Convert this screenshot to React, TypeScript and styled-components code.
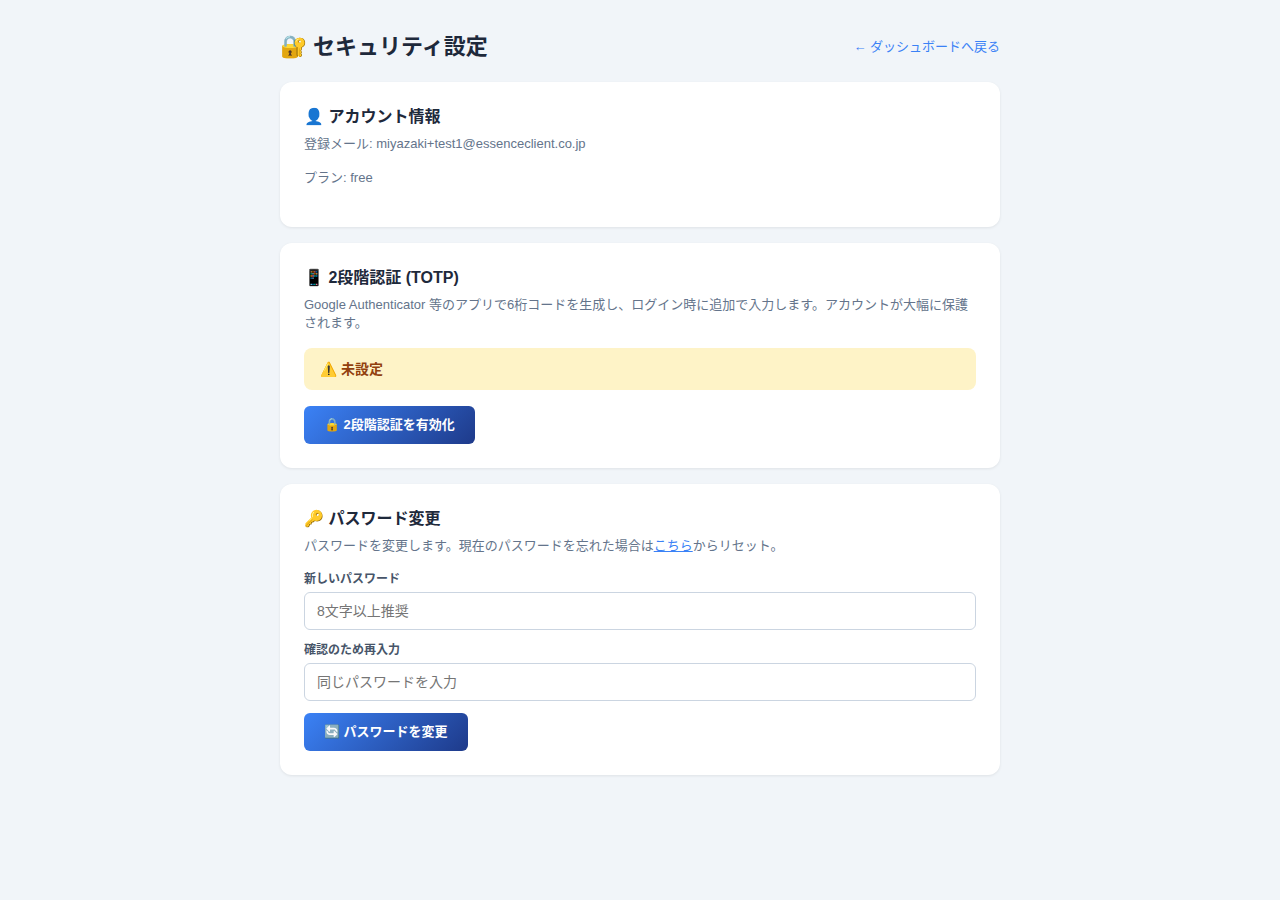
import React from "react";
import styled, { createGlobalStyle } from "styled-components";

const GlobalStyle = createGlobalStyle`
  * { box-sizing: border-box; }
  body {
    margin: 0;
    background: #f1f5f9;
    color: #1e293b;
    font-family: "Liberation Sans", "Noto Sans CJK JP", sans-serif;
  }
`;

const Page = styled.main`
  max-width: 768px;
  margin: 0 auto;
  padding: 32px 24px;
`;

const Header = styled.header`
  display: flex;
  justify-content: space-between;
  align-items: center;
  margin-bottom: 20px;
`;

const Title = styled.h1`
  margin: 0;
  font-size: 22px;
  line-height: 30px;
`;

const BackLink = styled.a`
  color: #3b82f6;
  font-size: 13px;
  line-height: 18px;
  text-decoration: none;
`;

const Card = styled.section`
  background: #fff;
  border-radius: 12px;
  padding: 24px;
  margin-bottom: 16px;
  box-shadow: 0 1px 3px rgba(0, 0, 0, 0.08);
`;

const CardTitle = styled.h2`
  margin: 0 0 8px;
  font-size: 16px;
  line-height: 21px;
`;

const Text = styled.p`
  margin: 0 0 16px;
  color: #64748b;
  font-size: 13px;
  line-height: 18px;

  a { color: #3b82f6; }
`;

const Status = styled.div`
  margin-bottom: 16px;
  padding: 12px 16px;
  border-radius: 8px;
  background: #fef3c7;
  color: #92400e;
  font-size: 14px;
  font-weight: 600;
  line-height: 18px;
`;

const Label = styled.label`
  display: block;
  margin-bottom: 4px;
  color: #475569;
  font-size: 12px;
  font-weight: 600;
  line-height: 17px;
`;

const Input = styled.input`
  display: block;
  width: 100%;
  height: 38px;
  margin-bottom: 12px;
  padding: 8px 12px;
  border: 1px solid #cbd5e1;
  border-radius: 6px;
  font-family: inherit;
  font-size: 14px;
`;

const Button = styled.button`
  display: block;
  padding: 10px 20px;
  border: 0;
  border-radius: 6px;
  background: linear-gradient(135deg, #3b82f6, #1e3a8a);
  color: #fff;
  font-family: inherit;
  font-size: 13px;
  font-weight: 600;
  line-height: 18px;
  cursor: pointer;
`;

export default function App() {
  return (
    <>
      <GlobalStyle />
      <Page>
        <Header>
          <Title>🔐 セキュリティ設定</Title>
          <BackLink href="#dashboard">← ダッシュボードへ戻る</BackLink>
        </Header>

        <Card>
          <CardTitle>👤 アカウント情報</CardTitle>
          <Text>登録メール: miyazaki+test1@essenceclient.co.jp</Text>
          <Text>プラン: free</Text>
        </Card>

        <Card>
          <CardTitle>📱 2段階認証 (TOTP)</CardTitle>
          <Text>
            Google Authenticator 等のアプリで6桁コードを生成し、ログイン時に追加で入力します。アカウントが大幅に保護されます。
          </Text>
          <Status>⚠️ 未設定</Status>
          <Button type="button">🔒 2段階認証を有効化</Button>
        </Card>

        <Card as="form" onSubmit={(e: React.FormEvent) => e.preventDefault()}>
          <CardTitle>🔑 パスワード変更</CardTitle>
          <Text>
            パスワードを変更します。現在のパスワードを忘れた場合は<a href="#reset">こちら</a>からリセット。
          </Text>
          <Label htmlFor="new-password">新しいパスワード</Label>
          <Input id="new-password" type="password" placeholder="8文字以上推奨" />
          <Label htmlFor="confirm-password">確認のため再入力</Label>
          <Input id="confirm-password" type="password" placeholder="同じパスワードを入力" />
          <Button type="submit">🔄 パスワードを変更</Button>
        </Card>
      </Page>
    </>
  );
}
